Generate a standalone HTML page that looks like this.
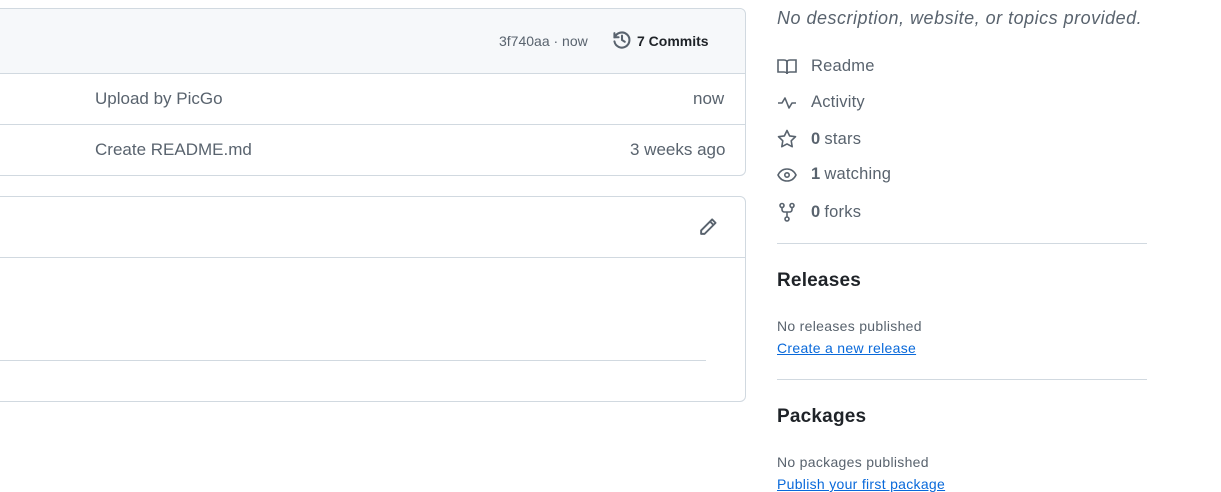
<!DOCTYPE html>
<html><head><style>
*{margin:0;padding:0;box-sizing:border-box}
body{width:1221px;height:491px;overflow:hidden;background:#fff;font-family:"Liberation Sans",sans-serif;color:#1f2328;position:relative}
.abs{position:absolute}
.box{position:absolute;left:-10px;width:756px;border:1px solid #d1d9e0;border-radius:6px}
.muted{color:#59636e}
.side{position:absolute;left:777px;font-size:16.5px;color:#59636e;display:flex;align-items:center;letter-spacing:0.2px}
.side svg{margin-right:14px}
.side b{color:#59636e;margin-right:4px}
h2{position:absolute;left:777px;font-size:19px;font-weight:bold;color:#1f2328;letter-spacing:0.2px}
.sm{position:absolute;left:777px;font-size:14px;color:#59636e;letter-spacing:0.3px}
a{color:#0969da;text-decoration:underline;font-size:14px;position:absolute;left:777px;letter-spacing:0.3px}
.hr{position:absolute;left:777px;width:370px;height:1px;background:#d1d9e0}
</style></head><body>
<div class="box" style="top:8px;height:168px">
 <div style="height:65px;background:#f6f8fa;border-bottom:1px solid #d1d9e0;border-radius:6px 6px 0 0"></div>
 <div style="height:51px;border-bottom:1px solid #d1d9e0"></div>
</div>
<div class="abs muted" style="left:499px;top:33px;font-size:14px">3f740aa · now</div>
<svg class="abs" style="left:611px;top:29px" width="22" height="22" viewBox="0 0 16 16" fill="none" stroke="#59636e" stroke-width="1.5" stroke-linecap="round"><path d="M2.5 3v3h3"/><path d="M2.8 6A5.5 5.5 0 1 1 2.5 9"/><path d="M8 4.8V8l2 1.3"/></svg>
<div class="abs" style="left:637px;top:33px;font-size:14px;font-weight:bold">7 Commits</div>
<div class="abs muted" style="left:95px;top:89px;font-size:17px">Upload by PicGo</div>
<div class="abs muted" style="left:693px;top:89px;font-size:17px">now</div>
<div class="abs muted" style="left:95px;top:140px;font-size:17px">Create README.md</div>
<div class="abs muted" style="left:630px;top:140px;font-size:17px">3 weeks ago</div>

<div class="box" style="top:196px;height:206px">
 <div style="height:61px;border-bottom:1px solid #d1d9e0"></div>
</div>
<svg class="abs" style="left:697px;top:216px" width="22" height="22" viewBox="0 0 16 16" fill="none" stroke="#59636e" stroke-width="1.4" stroke-linejoin="round"><path d="M11 2.5l2.5 2.5L5.5 13H3v-2.5z"/><path d="M9.5 4l2.5 2.5"/></svg>
<div class="abs" style="left:0;top:360px;width:706px;height:1px;background:#d1d9e0"></div>

<div class="abs muted" style="left:777px;top:8px;font-size:18px;font-style:italic;letter-spacing:0.5px">No description, website, or topics provided.</div>
<div class="side" style="top:57px"><svg width="20" height="18" viewBox="0 0 20 18" fill="none" stroke="#59636e" stroke-width="1.6"><path d="M1 2h6c2 0 3 1 3 2.5V16c0-1-1-2-3-2H1z"/><path d="M19 2h-6c-2 0-3 1-3 2.5V16c0-1 1-2 3-2h6z"/></svg>Readme</div>
<div class="side" style="top:93px"><svg width="20" height="18" viewBox="0 0 20 18" fill="none" stroke="#59636e" stroke-width="1.6" stroke-linejoin="round"><path d="M1 9h4l3-5 4 10 3-5h4"/></svg>Activity</div>
<div class="side" style="top:129px"><svg width="20" height="20" viewBox="0 0 20 20" fill="none" stroke="#59636e" stroke-width="1.6" stroke-linejoin="round"><path d="M10 1.5l2.6 5.4 5.9.8-4.3 4.1 1 5.9L10 14.9l-5.2 2.8 1-5.9L1.5 7.7l5.9-.8z"/></svg><b>0</b>stars</div>
<div class="side" style="top:165px"><svg width="20" height="18" viewBox="0 0 20 18" fill="none" stroke="#59636e" stroke-width="1.6"><path d="M1 9c2-4 5.5-6 9-6s7 2 9 6c-2 4-5.5 6-9 6s-7-2-9-6z"/><circle cx="10" cy="9" r="2.2"/></svg><b>1</b>watching</div>
<div class="side" style="top:202px"><svg width="20" height="20" viewBox="0 0 20 20" fill="none" stroke="#59636e" stroke-width="1.6"><circle cx="5" cy="3.5" r="2"/><circle cx="15" cy="3.5" r="2"/><circle cx="10" cy="17" r="2"/><path d="M5 5.5v2c0 1.5 1 2.5 2.5 2.5h5c1.5 0 2.5-1 2.5-2.5v-2M10 10v5"/></svg><b>0</b>forks</div>
<div class="hr" style="top:243px"></div>
<h2 style="top:270px">Releases</h2>
<div class="sm" style="top:318px">No releases published</div>
<a style="top:340px">Create a new release</a>
<div class="hr" style="top:379px"></div>
<h2 style="top:406px">Packages</h2>
<div class="sm" style="top:454px">No packages published</div>
<a style="top:476px">Publish your first package</a>
</body></html>
